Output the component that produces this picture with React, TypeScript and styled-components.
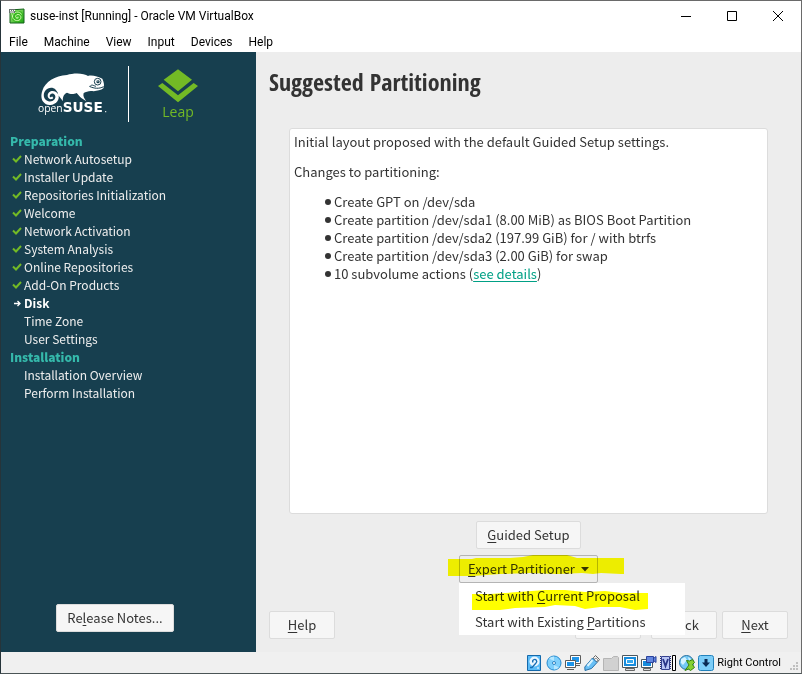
import React from "react";
import styled, { createGlobalStyle } from "styled-components";

const uiFont = `Roboto, "Noto Sans", sans-serif`;
const brandFont = `"Open Sans", "Noto Sans", sans-serif`;
const guestFont = `"Noto Sans CJK SC", "Noto Sans", sans-serif`;

const GlobalStyle = createGlobalStyle`
  *, *::before, *::after { box-sizing: border-box; }
  body { margin: 0; background: #ededed; }
  button { font: inherit; color: inherit; }
`;

const Window = styled.div`
  display: flex;
  flex-direction: column;
  min-height: 100vh;
  border: 1px solid #6a6a6a;
  border-left-color: #26343a;
  border-bottom-color: #4a5456;
  background: #fff;
  color: #000;
  font: 12px/16px ${uiFont};
`;

const TitleBar = styled.header`
  display: flex;
  align-items: center;
  height: 29px;
  padding-left: 8px;
`;

const Title = styled.h1`
  flex: 1;
  margin: 0 0 0 5px;
  font-size: 12px;
  font-weight: 400;
`;

const CaptionButton = styled.button`
  display: flex;
  align-items: center;
  justify-content: center;
  width: 46px;
  height: 29px;
  padding: 0;
  border: 0;
  background: none;
`;

const MenuBar = styled.nav`
  display: flex;
  height: 22px;
  align-items: center;
  gap: 16px;
  padding: 2px 0 0 8px;
`;

const MenuBarItem = styled.button`
  padding: 0;
  border: 0;
  background: none;
`;

const Guest = styled.div`
  display: flex;
  flex: 1;
  background: #ededed;
  color: #333;
  font: 13px/18px ${guestFont};
`;

const Sidebar = styled.aside`
  display: flex;
  flex-direction: column;
  flex: 0 0 255px;
  padding: 14px 9px 20px;
  background: #173f4f;
  color: #eee;
`;

const Brand = styled.div`
  display: flex;
  height: 56px;
  margin-bottom: 10px;
`;

const LogoCell = styled.div`
  width: 119px;
  padding-left: 17px;
  border-right: 1px solid #fff;
`;

const LeapCell = styled.div`
  display: flex;
  flex-direction: column;
  align-items: center;
  width: 98px;
  padding-top: 3px;
  color: #73ba25;
  font: 14px/18px ${brandFont};
`;

const StageTitle = styled.h2`
  margin: 0;
  color: #35b9ab;
  font-size: 12px;
  font-weight: 900;
  line-height: 18px;
`;

const Steps = styled.ol`
  margin: 0;
  padding: 0;
  font-size: 12px;
  list-style: none;
`;

const Step = styled.li<{ $current?: boolean }>`
  display: flex;
  align-items: center;
  height: 18px;
  color: ${(p) => (p.$current ? "#fff" : "#eee")};
  font-weight: ${(p) => (p.$current ? 700 : 400)};
`;

const StepMark = styled.span`
  display: flex;
  width: 14px;
  padding-left: 2px;
`;

const PushButton = styled.button<{ $pressed?: boolean }>`
  display: flex;
  align-items: center;
  justify-content: center;
  gap: 6px;
  min-width: 66px;
  height: 28px;
  padding: 0 ${(p) => (p.$pressed ? 8 : 10)}px;
  border: 1px solid ${(p) => (p.$pressed ? "#b4b4b4" : "#dcdcdc")};
  border-radius: 2px;
  background: ${(p) => (p.$pressed ? "#ededed" : "#f6f6f6")};
  color: #333;
  white-space: nowrap;

  u { text-underline-offset: 2px; }
`;

const ReleaseSlot = styled.div`
  display: flex;
  justify-content: center;
  margin-top: auto;
  padding-right: 27px;
`;

const Main = styled.main`
  display: flex;
  flex: 1;
  flex-direction: column;
  min-width: 0;
  padding: 13px 13px 13px;
`;

const PageTitle = styled.h2`
  margin: 0 0 29px;
  font: 700 24px/34px "Open Sans Condensed", "Liberation Sans Narrow", "Open Sans", sans-serif;
`;

const Proposal = styled.section`
  flex: 1;
  margin: 0 20px 7px;
  padding: 4px;
  border: 1px solid #dcdcdc;
  border-radius: 3px;
  background: #fff;

  p { margin: 0 0 12px; }
`;

const Actions = styled.ul`
  margin: 0;
  padding: 0 0 0 31px;
  list-style: none;
`;

const Action = styled.li`
  display: flex;
  align-items: center;
  gap: 3px;
`;

const Dot = styled.span`
  width: 6px;
  height: 6px;
  border-radius: 50%;
  background: #333;
`;

const Link = styled.a`
  color: #00a085;
  text-underline-offset: 2px;
`;

const Choices = styled.div`
  display: flex;
  flex-direction: column;
  align-items: center;
  gap: 6px;
  margin-bottom: 28px;
`;

const Dropdown = styled.div`
  position: relative;
`;

const DropMenu = styled.ul`
  position: absolute;
  z-index: 2;
  top: 28px;
  left: 0;
  width: 226px;
  margin: 0;
  padding: 0;
  background: #fff;
  list-style: none;
`;

const DropItem = styled.button`
  display: block;
  width: 100%;
  height: 26px;
  padding: 0 16px;
  border: 0;
  background: none;
  color: #333;
  text-align: left;

  u { text-underline-offset: 2px; }
`;

const Marker = styled.svg<{ $left: number; $top: number }>`
  position: absolute;
  z-index: 3;
  left: ${(p) => p.$left}px;
  top: ${(p) => p.$top}px;
  fill: #ff0;
  mix-blend-mode: multiply;
  pointer-events: none;
`;

const Wizard = styled.footer`
  display: flex;
  align-items: center;
`;

const WizardEnd = styled.div`
  display: flex;
  gap: 5px;
  margin-left: auto;
`;

const AbortSlot = styled.div`
  margin-right: 5px;
`;

const StatusBar = styled.footer`
  display: flex;
  align-items: center;
  justify-content: flex-end;
  gap: 3px;
  height: 21px;
  padding: 0 2px;
  background: #f0f0f0;
`;

const HostKey = styled.span`
  margin-right: 6px;
  font-size: 11px;
`;

function VmIcon() {
  return (
    <svg width="16" height="16" viewBox="0 0 16 16">
      <defs>
        <linearGradient id="vm" x1="0" y1="0" x2="1" y2="1">
          <stop offset="0" stopColor="#b5f58a" />
          <stop offset="1" stopColor="#19a30f" />
        </linearGradient>
      </defs>
      <path d="M1 2l14-1v14H1z" fill="url(#vm)" stroke="#14631a" />
      <path d="M13 7.500C12 3 5 3 4 8c-.5 4 4.500 6 7 3.500 2-2 .5-5-2-5-2.200 0-3 2-1.800 3.200" fill="none" stroke="#38b71f" strokeWidth="3" />
      <path d="M12.500 6.500C11 2.500 4 3.500 3.500 8c-.3 4 5 6 7.500 3.500 2-2 .5-5-2-5-2.200 0-3 2-1.800 3.200.8.800 2 .3 2-.7" fill="none" stroke="#d5ffb5" />
      <path d="M0 1h6v4H0z" fill="#66726c" />
      <path d="M1 2.500h1m1 0h1m1 0h1M1 4h4" stroke="#fff" />
    </svg>
  );
}

function Gecko() {
  return (
    <svg width="84" height="56" viewBox="0 0 252 168" role="img" aria-label="openSUSE">
      <g transform="translate(0 -6)">
        <path
          fill="#fff"
          d="M50 115C43 107 41 94 46 80C54 54 84 35 120 33C140 26 172 27 183 36C194 32 214 38 226 44C231 55 233 66 229 73C223 79 210 80 200 82C188 79 178 83 170 87C167 96 172 104 178 112L163 102C157 98 154 91 149 87C136 93 128 89 120 86C110 90 106 101 108 112L94 94C94 88 91 83 86 77C78 69 63 70 56 79C46 90 50 108 64 112C77 115 89 105 84 94C80 86 69 87 68 96C68 101 74 101 75 97L79 102C74 109 62 105 62 96C62 79 84 76 93 90C101 105 88 122 70 123C61 124 54 120 50 115Z"
        />
        <path d="M187 67C202 74 216 75 230 68M190 66C195 60 201 66 207 67" fill="none" stroke="#173f4f" strokeWidth="3" />
        <circle cx="212" cy="53" r="10" fill="none" stroke="#173f4f" strokeWidth="3" />
        <circle cx="213" cy="53" r="5" fill="#173f4f" />
        <path d="M209 51h6" stroke="#fff" strokeWidth="2" />
      </g>
      <text x="33" y="139" fill="#fff" fontFamily={brandFont} fontSize="31">open</text>
      <text x="107" y="139" fill="#fff" fontFamily={`"DejaVu Sans", sans-serif`} fontWeight="700" fontSize="41">SUSE</text>
      <circle cx="236" cy="137" r="2" fill="#fff" />
    </svg>
  );
}

function LeapMark() {
  return (
    <svg width="40" height="34" viewBox="0 0 120 102" fill="#73ba25">
      <path d="M60 1l42 31-42 35-43-35zM0 51l13-9 47 37 47-37 13 9-60 49z" />
    </svg>
  );
}

function Check() {
  return (
    <svg width="10" height="10" viewBox="0 0 10 10">
      <path d="M1 4.500l3 3L9 2" fill="none" stroke="#73ba25" strokeWidth="2" />
    </svg>
  );
}

function Arrow() {
  return (
    <svg width="10" height="10" viewBox="0 0 10 10">
      <path d="M2 5.500h6M5.500 3L8 5.500 5.500 8" fill="none" stroke="#fff" strokeWidth="1.300" />
    </svg>
  );
}

const deviceIcons: { name: string; art: React.ReactNode }[] = [
  {
    name: "Hard disks",
    art: (
      <>
        <path d="M.5.5h13v15H.5z" fill="#5bbcf8" stroke="#1569ab" />
        <circle cx="7.500" cy="6.500" r="5" fill="#eaf6ff" />
        <path d="M6 7.500a2 2 0 1 1 3 .5L5 12.500H3" fill="none" stroke="#176db3" strokeWidth="1.300" />
        <path d="M10 13h2" stroke="#fff" />
      </>
    ),
  },
  {
    name: "Optical drives",
    art: (
      <>
        <circle cx="8" cy="8" r="7" fill="#7fd0fc" stroke="#268bd0" />
        <path d="M3 3.500A7 7 0 0 1 8 1.500V6zM13 12.500A7 7 0 0 1 8 14.500V10z" fill="#b8e8ff" />
        <circle cx="8" cy="8" r="1.500" fill="#fff" stroke="#2b83c2" />
      </>
    ),
  },
  {
    name: "Network",
    art: (
      <>
        <path d="M5.500.5h10v8h-10zM9 10.500h6" fill="#fff" stroke="#5b5b5b" />
        <path d="M7 2h7v5H7z" fill="#2095e8" />
        <path d="M.5 5.500h10v7H.5zM2 14.500h7" fill="#fff" stroke="#5b5b5b" />
        <path d="M2 7h7v4H2z" fill="#1c93e8" />
      </>
    ),
  },
  {
    name: "USB",
    art: (
      <>
        <path d="M9.500 2.500l2-2 4 4-2 2.500-3-1z" fill="#eee" stroke="#666" />
        <path d="M11.500 3.500h1M13 5h1" stroke="#444" />
        <path d="M8.500 3l4.500 4.500-5.500 6L1 15.500.800 12z" fill="#69c0f6" stroke="#246fa8" />
        <path d="M8.500 5l-5 6" stroke="#d9f4ff" strokeWidth="2" />
      </>
    ),
  },
  {
    name: "Shared folders",
    art: <path d="M.5 3.500h8l2-2h4l1 1v13H.5z" fill="#d1d1d1" stroke="#b5b5b5" />,
  },
  {
    name: "Display",
    art: (
      <>
        <path d="M.5.5h15v12H.5z" fill="#fff" stroke="#4b5860" />
        <path d="M2 2h12v9H2z" fill="#168bdc" />
        <path d="M4.500 4.500h7v4h-7z" fill="#36a8ee" stroke="#fff" />
        <path d="M3.500 13.500h9v2h-9z" fill="#ddd" stroke="#666" />
      </>
    ),
  },
  {
    name: "Recording",
    art: (
      <>
        <path d="M.5 4.500h11v8H.5z" fill="#fff" stroke="#4b5860" />
        <path d="M2 6h8v5H2z" fill="#168bdc" />
        <path d="M2.500 13.500h7v2h-7z" fill="#ddd" stroke="#666" />
        <path d="M5.500 1.500h7v6h-7zM12.500 3.500l2.500-2v6l-2.500-2z" fill="#6386df" stroke="#29429d" />
      </>
    ),
  },
  {
    name: "Processor",
    art: (
      <>
        <path d="M.5 1v14M10.500 1v14" stroke="#232b76" strokeDasharray="1 1" />
        <path d="M1.500 1.500h8v13h-8z" fill="#b9c5f5" stroke="#35418f" />
        <path d="M3 4l2.500 7L8 4" fill="none" stroke="#2a3688" strokeWidth="1.800" />
        <path d="M12.500.5h3v15h-3z" fill="#fff" stroke="#000" />
      </>
    ),
  },
  {
    name: "Mouse integration",
    art: (
      <>
        <circle cx="7.500" cy="7.500" r="7" fill="#73c9f5" stroke="#266e9e" />
        <path d="M2 4l4-2 2 3-4 5-2-2zM9 2l3 2-2 2z" fill="#d4f3ff" />
        <path d="M7.500 5.500l3 .5 3-1.500 2 3-2 2 2 3-4 3-2-1.500-3.500 1.500 4-5.500z" fill="#84d132" stroke="#35800e" />
      </>
    ),
  },
  {
    name: "Keyboard capture",
    art: (
      <>
        <rect x=".5" y=".5" width="15" height="15" rx="2" fill="#7ccdf8" stroke="#2282bc" />
        <path d="M8 4v5" stroke="#0a2b54" strokeWidth="3" />
        <path d="M4 7.500h8L8 12z" fill="#0a2b54" />
      </>
    ),
  },
];

const done = [
  "Network Autosetup",
  "Installer Update",
  "Repositories Initialization",
  "Welcome",
  "Network Activation",
  "System Analysis",
  "Online Repositories",
  "Add-On Products",
];

const actions = [
  "Create GPT on /dev/sda",
  "Create partition /dev/sda1 (8.00 MiB) as BIOS Boot Partition",
  "Create partition /dev/sda2 (197.99 GiB) for / with btrfs",
  "Create partition /dev/sda3 (2.00 GiB) for swap",
];

export default function App() {
  return (
    <Window>
      <GlobalStyle />
      <TitleBar>
        <VmIcon />
        <Title>suse-inst [Running] - Oracle VM VirtualBox</Title>
        <CaptionButton aria-label="Minimize">
          <svg width="12" height="12"><path d="M1 6.500h10" stroke="#000" /></svg>
        </CaptionButton>
        <CaptionButton aria-label="Maximize">
          <svg width="12" height="12"><path d="M1.500 1.500h9v9h-9z" fill="none" stroke="#000" /></svg>
        </CaptionButton>
        <CaptionButton aria-label="Close">
          <svg width="12" height="12"><path d="M1 1l10 10M11 1L1 11" stroke="#000" /></svg>
        </CaptionButton>
      </TitleBar>
      <MenuBar>
        {["File", "Machine", "View", "Input", "Devices", "Help"].map((m) => (
          <MenuBarItem key={m}>{m}</MenuBarItem>
        ))}
      </MenuBar>

      <Guest>
        <Sidebar>
          <Brand>
            <LogoCell><Gecko /></LogoCell>
            <LeapCell><LeapMark />Leap</LeapCell>
          </Brand>
          <StageTitle>Preparation</StageTitle>
          <Steps>
            {done.map((s) => (
              <Step key={s}><StepMark><Check /></StepMark>{s}</Step>
            ))}
            <Step $current><StepMark><Arrow /></StepMark>Disk</Step>
            <Step><StepMark />Time Zone</Step>
            <Step><StepMark />User Settings</Step>
          </Steps>
          <StageTitle>Installation</StageTitle>
          <Steps>
            <Step><StepMark />Installation Overview</Step>
            <Step><StepMark />Perform Installation</Step>
          </Steps>
          <ReleaseSlot>
            <PushButton><span>Re<u>l</u>ease Notes...</span></PushButton>
          </ReleaseSlot>
        </Sidebar>

        <Main>
          <PageTitle>Suggested Partitioning</PageTitle>
          <Proposal>
            <p>Initial layout proposed with the default Guided Setup settings.</p>
            <p>Changes to partitioning:</p>
            <Actions>
              {actions.map((a) => (
                <Action key={a}><Dot />{a}</Action>
              ))}
              <Action>
                <Dot />
                <span>10 subvolume actions (<Link href="#details">see details</Link>)</span>
              </Action>
            </Actions>
          </Proposal>
          <Choices>
            <PushButton><span><u>G</u>uided Setup</span></PushButton>
            <Dropdown>
              <PushButton $pressed aria-haspopup="menu" aria-expanded="true">
                <span><u>E</u>xpert Partitioner</span>
                <svg width="8" height="5"><path d="M0 0h8L4 4.500z" fill="#333" /></svg>
              </PushButton>
              <DropMenu role="menu">
                <li role="none"><DropItem role="menuitem">Start with <u>C</u>urrent Proposal</DropItem></li>
                <li role="none"><DropItem role="menuitem">Start with Existing <u>P</u>artitions</DropItem></li>
              </DropMenu>
              <Marker $left={-11} $top={0} width="176" height="22">
                <path d="M0 4H24L28 3H62L75 2L85 0H119L129 3H176V19H173L153 18L145 19L134 18L110 19L82 18L52 19L25 21H0Z" />
              </Marker>
              <Marker $left={13} $top={35} width="176" height="20">
                <path d="M0 4H18L33 3L73 0H93L113 2L133 1L150 3H176V19L163 20L148 17H128L113 19L103 16L83 15L73 17L43 18L28 20H0Z" />
              </Marker>
            </Dropdown>
          </Choices>
          <Wizard>
            <PushButton><span><u>H</u>elp</span></PushButton>
            <WizardEnd>
              <AbortSlot><PushButton aria-label="Abort" /></AbortSlot>
              <PushButton><span><u>B</u>ack</span></PushButton>
              <PushButton><span><u>N</u>ext</span></PushButton>
            </WizardEnd>
          </Wizard>
        </Main>
      </Guest>

      <StatusBar>
        {deviceIcons.map((d) => (
          <svg key={d.name} width="16" height="16" viewBox="0 0 16 16" role="img" aria-label={d.name}>{d.art}</svg>
        ))}
        <HostKey>Right Control</HostKey>
        <svg width="9" height="16" fill="#bfbfbf">
          <path d="M6 7h2v2H6zM3 10h2v2H3zM6 10h2v2H6zM0 13h2v2H0zM3 13h2v2H3zM6 13h2v2H6z" />
        </svg>
      </StatusBar>
    </Window>
  );
}
